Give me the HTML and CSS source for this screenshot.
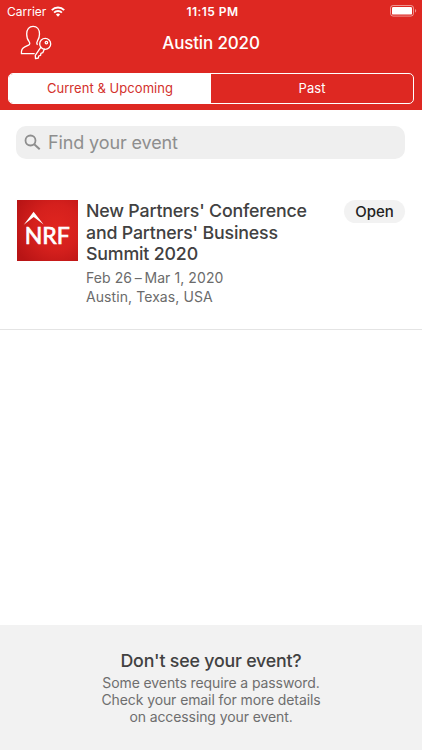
FILE: index.html
```html
<!DOCTYPE html>
<html lang="en">

<head>
  <meta charset="UTF-8" />
  <meta name="viewport" content="width=device-width, initial-scale=1.0" />
  <title>Austin 2020</title>
  <link rel="stylesheet" href="styles.css">
</head>

<body>
  <header class="header">
    <div class="status-bar">
      <div class="carrier">
        <span class="carrier-name">Carrier</span>
        <svg class="wifi" width="14" height="11" viewBox="0 0 14 11" fill="none" stroke="#fff" stroke-width="1.9">
          <path d="M.8 4.1a8.8 8.8 0 0 1 12.4 0" />
          <path d="M3.1 6.6a5.5 5.5 0 0 1 7.8 0" />
          <path d="M7 10.7 4.9 8.6a3 3 0 0 1 4.2 0z" fill="#fff" stroke="none" />
        </svg>
      </div>
      <span class="time">11:15 PM</span>
      <svg class="battery" width="27" height="12" viewBox="0 0 27 12">
        <rect x=".5" y=".5" width="23" height="10.6" rx="2.6" fill="none" stroke="#fff" stroke-opacity=".5" />
        <rect x="2" y="2" width="20" height="7.6" rx="1.2" fill="#fff" />
        <path d="M25 4v3.6c1.600-.5 1.600-3.100 0-3.600z" fill="#fff" fill-opacity=".5" />
      </svg>
    </div>

    <div class="nav-bar">
      <!-- login: person with a key -->
      <svg class="login-icon" width="32" height="35" viewBox="0 0 32 35" fill="none" stroke="#fff" stroke-width="1.3" stroke-linecap="round" stroke-linejoin="round">
        <path d="M14.200 28.600H1.400c-.3-3.800.6-5.600 3.400-6.800l3.700-1.600c1.500-.8 1.600-2.200.7-3.400C7.400 14.800 6.700 12.400 6.700 9 6.700 4.200 9.200 1.400 13.100 1.400s6.400 2.800 6.400 7.600c0 3-.7 4.900-2 6.800-.8 1.300-.9 2.500-.3 3.700" />
        <circle cx="25.200" cy="18.900" r="5.500" />
        <circle cx="26.400" cy="17.600" r="1.200" />
        <path d="M20.900 22.200l-5.600 8.200.2 3.300 2.900-.7.300-2 1.900-.6.300-2.100 1.900-.6 1.500-3.500" />
      </svg>
      <h1>Austin 2020</h1>
    </div>

    <div class="tabs">
      <button class="tab active">Current &amp; Upcoming</button>
      <button class="tab">Past</button>
    </div>
  </header>

  <main class="content">
    <div class="search">
      <svg width="17" height="17" viewBox="0 0 17 17" fill="none" stroke="#8e8e8e" stroke-width="1.8">
        <circle cx="6.500" cy="6.500" r="5" />
        <path d="M10.200 10.200l5.500 5" stroke-width="2" />
      </svg>
      <span>Find your event</span>
    </div>

    <div class="event">
      <svg class="event-logo" width="61" height="61" viewBox="0 0 61 61">
        <defs>
          <radialGradient id="logoRed" cx=".65" cy=".45" r=".75">
            <stop offset="0" stop-color="#e0251f" />
            <stop offset=".5" stop-color="#d5201d" />
            <stop offset="1" stop-color="#b81415" />
          </radialGradient>
        </defs>
        <rect width="61" height="61" fill="url(#logoRed)" />
        <path d="M6.800 24.800 16.600 11.800 26.600 24.500 16.700 17z" fill="#fff" />
        <text class="logo-text" x="7.800" y="44" textLength="45" lengthAdjust="spacingAndGlyphs">NRF</text>
      </svg>
      <div class="event-info">
        <h2>New Partners' Conference<br>and Partners' Business<br>Summit 2020</h2>
        <p>Feb 26&#8201;–&#8201;Mar 1, 2020<br>Austin, Texas, USA</p>
      </div>
      <button class="open-btn">Open</button>
    </div>
  </main>

  <footer class="help">
    <h3>Don't see your event?</h3>
    <p>Some events require a password.<br>Check your email for more details<br>on accessing your event.</p>
  </footer>
</body>

</html>
```
FILE: styles.css
```css
* {
  box-sizing: border-box;
}

body {
  font-family: Inter, "Liberation Sans", sans-serif;
  margin: 0;
  height: 750px;
  display: flex;
  flex-direction: column;
  background-color: #fff;
  color: #414141;
}

h1,
h2,
h3,
p {
  margin: 0;
}

button {
  font-family: inherit;
  border: none;
  padding: 0;
  cursor: pointer;
}

/* Red top area */
.header {
  height: 110px;
  background-color: #de2822;
  color: #fff;
}

.status-bar {
  height: 22px;
  padding: 0 5px 0 7px;
  display: grid;
  grid-template-columns: 1fr auto 1fr;
  align-items: center;
  font-size: 12px;
}

.carrier {
  display: flex;
  align-items: center;
  gap: 5px;
}

.time {
  margin-left: 1px;
  font-weight: 600;
  letter-spacing: 0.45px;
}

.battery {
  justify-self: end;
}

.nav-bar {
  height: 51px;
  padding: 3px 0 0 20px;
  display: grid;
  grid-template-columns: 32px 1fr 52px;
  align-items: start;
}

.nav-bar h1 {
  font-size: 17px;
  font-weight: 550;
  line-height: 37px;
  letter-spacing: -0.15px;
  text-align: center;
}

.tabs {
  margin: 0 8px;
  height: 31px;
  display: flex;
  border: 1px solid #fff;
  border-radius: 5px;
  overflow: hidden;
}

.tab {
  flex: 1;
  padding-bottom: 2px;
  background-color: transparent;
  color: #fff;
  font-size: 13px;
  letter-spacing: 0.05px;
}

.tab.active {
  background-color: #fff;
  color: #d3302b;
}

.content {
  flex: 1;
}

.search {
  margin: 16px 17px 0 16px;
  height: 33px;
  padding-left: 8px;
  display: flex;
  align-items: center;
  gap: 7px;
  background-color: #efefef;
  border-radius: 10px;
  color: #8e8e8e;
  font-size: 18px;
  letter-spacing: -0.12px;
}

.event {
  margin-top: 41px;
  height: 130px;
  padding: 0 17px;
  display: flex;
  align-items: flex-start;
  border-bottom: 1px solid #e4e4e4;
}

.logo-text {
  font-family: Lato, sans-serif;
  font-size: 22.5px;
  font-weight: 400;
  fill: #fff;
  stroke: #fff;
  stroke-width: 0.7px;
}

.event-info {
  flex: 1;
  padding-left: 8px;
}

.event-info h2 {
  font-size: 17.8px;
  font-weight: 500;
  line-height: 21.7px;
  letter-spacing: -0.18px;
}

.event-info p {
  margin-top: 4px;
  color: #6b6b6b;
  font-size: 14px;
  line-height: 18.5px;
  letter-spacing: 0.08px;
}

.open-btn {
  width: 61px;
  height: 23px;
  border-radius: 12px;
  background-color: #f2f2f2;
  color: #222;
  font-size: 15px;
  font-weight: 500;
}

/* Grey box at the bottom */
.help {
  height: 125px;
  padding-top: 25px;
  background-color: #f2f2f2;
  text-align: center;
}

.help h3 {
  font-size: 17.8px;
  font-weight: 550;
  line-height: 22px;
  letter-spacing: -0.2px;
}

.help p {
  color: #6e6e6e;
  font-size: 14px;
  line-height: 17px;
  letter-spacing: -0.1px;
  margin-top: 2px;
}
```
